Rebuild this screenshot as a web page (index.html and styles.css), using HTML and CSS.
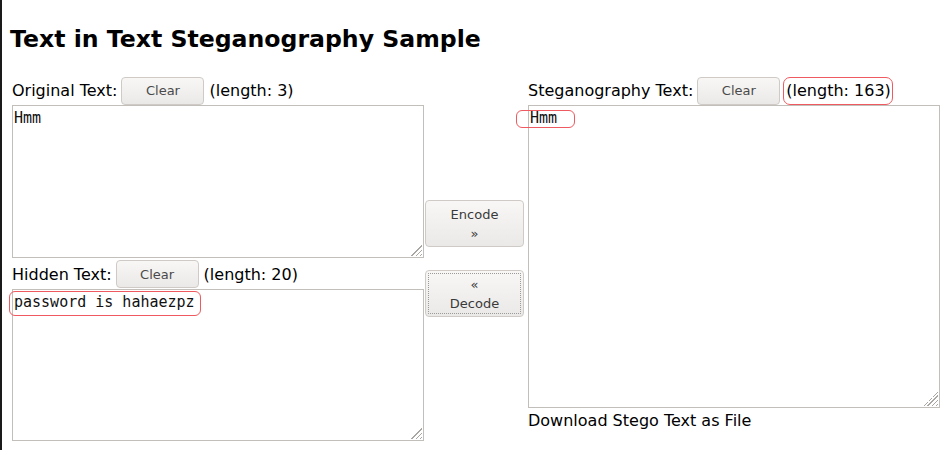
FILE: index.html
```html
<!DOCTYPE html>
<html>
<head>
<meta charset="utf-8">
<link rel="stylesheet" href="styles.css">
</head>
<body>
<div class="page">
  <h1 class="title">Text in Text Steganography Sample</h1>
  <div class="main">
    <div class="col">
      <div class="row">
        <span class="label">Original Text:</span>
        <button class="btn btn-clear">Clear</button>
        <span class="len">(length: 3)</span>
      </div>
      <div class="area-wrap">
        <textarea class="area area-orig">Hmm</textarea>
      </div>
      <div class="row row-tight">
        <span class="label">Hidden Text:</span>
        <button class="btn btn-clear">Clear</button>
        <span class="len">(length: 20)</span>
      </div>
      <div class="area-wrap">
        <textarea class="area area-hidden">password is hahaezpz</textarea>
        <span class="mark mark-hidden"></span>
      </div>
    </div>
    <div class="mid">
      <button class="btn btn-big">Encode<br>»</button>
      <button class="btn btn-big btn-focus">«<br>Decode</button>
    </div>
    <div class="col col-right">
      <div class="row">
        <span class="label">Steganography Text:</span>
        <button class="btn btn-clear">Clear</button>
        <span class="len len-marked">(length: 163)</span>
      </div>
      <div class="area-wrap">
        <textarea class="area area-stego">Hmm</textarea>
        <span class="mark mark-stego"></span>
      </div>
      <div class="download">Download Stego Text as File</div>
    </div>
  </div>
</div>
</body>
</html>
```
FILE: styles.css
```css
html, body {
  margin: 0;
  padding: 0;
  background: #ffffff;
}
.page {
  width: 940px;
  height: 450px;
  border-left: 2px solid #1a1a1a;
  font-family: "DejaVu Sans", sans-serif;
  color: #000;
  overflow: hidden;
}
.title {
  margin: 0;
  padding: 25px 0 0 8px;
  font-size: 23.6px;
  line-height: 28px;
  font-weight: bold;
}
.main {
  display: flex;
  padding: 23px 0 0 10px;
}
.col {
  width: 412px;
  display: flex;
  flex-direction: column;
}
.col-right {
  margin-left: 4px;
}
.row {
  display: flex;
  align-items: center;
  height: 29px;
}
.row-tight {
  height: 30px;
  padding-top: 1px;
}
.label {
  font-size: 16px;
  margin-right: 4px;
}
.len {
  font-size: 16px;
  margin-left: 5px;
}
.len-marked {
  margin-left: 3px;
  padding: 0 1px 0 2px;
  border: 1px solid #ee5a5f;
  border-radius: 7px;
  line-height: 26px;
}
.btn {
  font-family: "DejaVu Sans", sans-serif;
  font-size: 13px;
  color: #4a4a4a;
  background: linear-gradient(#f8f7f6, #ebe9e7);
  border: 1px solid #cfcac5;
  border-radius: 4px;
  padding: 0;
  margin: 0;
}
.btn-clear {
  width: 83px;
  height: 28px;
}
.mid {
  width: 100px;
  display: flex;
  flex-direction: column;
  align-items: flex-end;
  padding-top: 124px;
  gap: 23px;
}
.btn-big {
  width: 99px;
  height: 47px;
  line-height: 19px;
  color: #3a3a3a;
}
.btn-focus {
  outline: 1px dotted #9a9a9a;
  outline-offset: -4px;
}
.area-wrap {
  position: relative;
}
.area {
  display: block;
  box-sizing: border-box;
  width: 412px;
  margin: 0;
  border: 1px solid #c2beba;
  padding: 3px 1px;
  font-family: "DejaVu Sans Mono", monospace;
  font-size: 15px;
  line-height: 18px;
  color: #111;
  resize: none;
  outline: none;
  background:
    linear-gradient(to bottom right, #fff 50%, transparent 50%) right 1px bottom 1px / 14px 14px no-repeat,
    repeating-linear-gradient(135deg, #a9a6a3 0 1px, transparent 1px 3px) right 1px bottom 1px / 14px 14px no-repeat,
    #fff;
}
.area-orig { height: 153px; }
.area-hidden { height: 152px; }
.area-stego { height: 303px; }
.mark {
  position: absolute;
  border: 1px solid #ee5a5f;
  border-radius: 6px;
}
.mark-hidden {
  left: -3px;
  top: 2px;
  width: 190px;
  height: 23px;
}
.mark-stego {
  left: -12px;
  top: 5px;
  width: 57px;
  height: 16px;
}
.download {
  font-size: 16px;
  margin-top: 3px;
  line-height: 20px;
}
```
